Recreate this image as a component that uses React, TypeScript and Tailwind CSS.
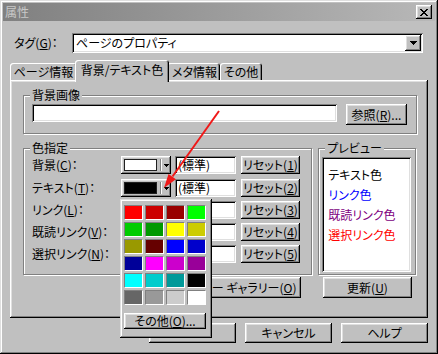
import React from "react";

const raised =
  "shadow-[inset_-1px_-1px_#000,inset_1px_1px_#fff,inset_-2px_-2px_#808080,inset_2px_2px_#dfdfdf]";
const sunken =
  "shadow-[inset_1px_1px_#808080,inset_-1px_-1px_#fff,inset_2px_2px_#000,inset_-2px_-2px_#dfdfdf]";
const winFrame =
  "shadow-[inset_-1px_-1px_#000,inset_1px_1px_#dfdfdf,inset_-2px_-2px_#808080,inset_2px_2px_#fff]";
const tabShadow =
  "shadow-[inset_1px_1px_#fff,inset_-1px_0_#000,inset_-2px_0_#808080]";

function M({ c }: { c: string }) {
  return <span className="underline decoration-1 underline-offset-[1px]">{c}</span>;
}

function Group({
  label,
  className,
  children,
}: {
  label: string;
  className: string;
  children?: React.ReactNode;
}) {
  return (
    <div
      className={`relative border border-[#808080] shadow-[inset_1px_1px_#fff,1px_1px_#fff] ${className}`}
    >
      <span className="absolute -top-[8px] left-[6px] px-[2px] bg-[#c0c0c0] leading-[14px] whitespace-nowrap">
        {label}
      </span>
      {children}
    </div>
  );
}

function Btn({ className, children }: { className: string; children: React.ReactNode }) {
  return (
    <div
      className={`bg-[#c0c0c0] ${raised} flex items-center justify-center whitespace-nowrap leading-[14px] ${className}`}
    >
      {children}
    </div>
  );
}

const swatches = [
  "#ff0000", "#cc0000", "#990000", "#00ff00",
  "#00cc00", "#009900", "#ffff00", "#cccc00",
  "#999900", "#660000", "#0000ff", "#0000cc",
  "#000099", "#ff00ff", "#cc00cc", "#990099",
  "#00ffff", "#00cccc", "#009999", "#000000",
  "#666666", "#999999", "#cccccc", "#ffffff",
];

const rows: { label: React.ReactNode; color?: string; mt: string }[] = [
  { label: <>背景(<M c="C" />)：</>, color: "#ffffff", mt: "mt-0" },
  { label: <>テキスト(<M c="T" />)：</>, color: "#000000", mt: "mt-[5px]" },
  { label: <>リンク(<M c="L" />)：</>, mt: "mt-[4px]" },
  { label: <>既読リンク(<M c="V" />)：</>, mt: "mt-[4px]" },
  { label: <>選択リンク(<M c="N" />)：</>, mt: "mt-[4px]" },
];

function ColorBtn({ color }: { color: string }) {
  return (
    <div className={`w-[50px] h-[18px] bg-[#c0c0c0] ${raised} flex items-center pl-[3px]`}>
      <div className="w-[33px] h-[12px] border border-[#202020]" style={{ backgroundColor: color }} />
      <div className="w-[1px] h-[12px] bg-[#808080] ml-[3px]" />
      <div className="w-[1px] h-[12px] bg-white" />
      <svg width="5" height="3" className="ml-[2px]" shapeRendering="crispEdges">
        <path d="M0 0h5v1H0zM1 1h3v1H1zM2 2h1v1H2z" fill="#000" />
      </svg>
    </div>
  );
}

export default function App() {
  return (
    <div
      className={`relative w-[438px] h-[354px] bg-[#c0c0c0] ${winFrame} p-[3px] flex flex-col font-['Noto_Sans_CJK_JP',sans-serif] text-[12px] leading-[14px] text-black [font-feature-settings:'palt'] overflow-hidden`}
    >
      {/* title bar */}
      <div className="h-[18px] shrink-0 flex items-center justify-between bg-linear-to-r from-[#808080] to-[#b8b8b8] pl-[2px] pr-[3px]">
        <span className="text-[#c8c8c8] leading-[14px]">属性</span>
        <div className={`w-[16px] h-[14px] bg-[#c0c0c0] ${raised} flex items-center justify-center`}>
          <svg width="8" height="7" shapeRendering="crispEdges">
            <path
              d="M0 0h2v1H0zM6 0h2v1H6zM1 1h2v1H1zM5 1h2v1H5zM2 2h4v1H2zM3 3h2v1H3zM2 4h4v1H2zM1 5h2v1H1zM5 5h2v1H5zM0 6h2v1H0zM6 6h2v1H6z"
              fill="#000"
            />
          </svg>
        </div>
      </div>

      <div className="flex flex-col px-[7px]">
        {/* tag row */}
        <div className="flex items-center mt-[12px] ml-[4px] h-[20px]">
          <div className="w-[58px] whitespace-nowrap">
            タグ(<M c="G" />)：
          </div>
          <div className={`w-[351px] h-[20px] bg-white ${sunken} p-[2px] flex`}>
            <div className="flex-1 flex items-center pl-[2px]">ページのプロパティ</div>
            <div className={`w-[16px] h-[16px] bg-[#c0c0c0] ${raised} flex items-center justify-center`}>
              <svg width="7" height="4" shapeRendering="crispEdges">
                <path d="M0 0h7v1H0zM1 1h5v1H1zM2 2h3v1H2zM3 3h1v1H3z" fill="#000" />
              </svg>
            </div>
          </div>
        </div>

        {/* tabs */}
        <div className="flex items-end h-[20px] mt-[7px] relative z-10">
          <div className={`w-[67px] h-[17px] ${tabShadow} rounded-t-[3px] flex items-center justify-center`}>
            ページ情報
          </div>
          <div
            className={`relative z-10 w-[94px] h-[22px] -mb-[2px] -ml-[2px] -mr-[2px] bg-[#c0c0c0] ${tabShadow} rounded-t-[3px] flex items-center justify-center pb-[2px]`}
          >
            背景/テキスト色
          </div>
          <div className={`w-[53px] h-[17px] ${tabShadow} rounded-t-[3px] flex items-center justify-center pl-[2px]`}>
            メタ情報
          </div>
          <div className={`w-[42px] h-[17px] ${tabShadow} rounded-t-[3px] flex items-center justify-center`}>
            その他
          </div>
        </div>

        {/* panel */}
        <div className={`h-[238px] ${raised} pt-[15px] pl-[13px] pr-[12px] flex flex-col`}>
          <Group label="背景画像" className="w-[394px] h-[39px] pt-[8px] pl-[8px] flex items-start">
            <div className={`w-[305px] h-[18px] bg-white ${sunken}`} />
            <Btn className="w-[61px] h-[21px] ml-[9px]">
              参照(<M c="R" />)...
            </Btn>
          </Group>

          <div className="flex gap-[6px] mt-[14px]">
            <Group label="色指定" className="w-[290px] h-[127px] pt-[7px] pl-[8px] flex flex-col">
              {rows.map((r, i) => (
                <div key={i} className={`flex items-center h-[18px] ${r.mt}`}>
                  <div className="w-[89px] whitespace-nowrap">{r.label}</div>
                  {r.color ? (
                    <ColorBtn color={r.color} />
                  ) : (
                    <div className="w-[50px] h-[18px]" />
                  )}
                  <div className={`w-[61px] h-[18px] ml-[4px] bg-white ${sunken} flex items-center pl-[3px]`}>
                    (標準)
                  </div>
                  <Btn className="w-[59px] h-[18px] ml-[5px]">
                    リセット(<M c={String(i + 1)} />)
                  </Btn>
                </div>
              ))}
            </Group>
            <Group label="プレビュー" className="w-[98px] h-[127px] pt-[8px] pl-[3px]">
              <div className={`w-[89px] h-[115px] bg-white ${sunken} pt-[8px] pl-[6px] flex flex-col leading-[20px]`}>
                <span className="text-black">テキスト色</span>
                <span className="text-[#0000ff]">リンク色</span>
                <span className="text-[#800080]">既読リンク色</span>
                <span className="text-[#ff0000]">選択リンク色</span>
              </div>
            </Group>
          </div>

          <div className="flex mt-[2px]">
            <Btn className="w-[115px] h-[21px] ml-[163px]">
              カラー ギャラリー(<M c="O" />)
            </Btn>
            <Btn className="w-[89px] h-[21px] ml-[22px]">
              更新(<M c="U" />)
            </Btn>
          </div>
        </div>

        {/* bottom buttons */}
        <div className="flex justify-end gap-[9px] mt-[5px]">
          <Btn className="w-[87px] h-[20px]">OK</Btn>
          <Btn className="w-[87px] h-[20px]">キャンセル</Btn>
          <Btn className="w-[87px] h-[20px]">ヘルプ</Btn>
        </div>
      </div>

      {/* color popup */}
      <div className={`absolute left-[120px] top-[199px] w-[92px] h-[139px] bg-[#c0c0c0] ${winFrame} z-20 pt-[6px] pl-[4px] flex flex-col`}>
        <div className="grid grid-cols-[repeat(4,19px)] auto-rows-[15px] gap-[2px]">
          {swatches.map((c, i) => (
            <div
              key={i}
              className="border-t border-l border-t-[#808080] border-l-[#808080] border-b border-r border-b-white border-r-white"
              style={{ backgroundColor: c }}
            />
          ))}
        </div>
        <Btn className="w-[82px] h-[16px] mt-[8px]">
          その他(<M c="O" />)...
        </Btn>
      </div>

      {/* red arrow */}
      <svg className="absolute left-0 top-0 z-30 pointer-events-none" width="438" height="354">
        <line x1="219" y1="111" x2="172.5" y2="176.5" stroke="#f01818" strokeWidth="2" />
        <polygon points="164,188 175.9,179.3 168.5,174" fill="#f01818" />
      </svg>
    </div>
  );
}
